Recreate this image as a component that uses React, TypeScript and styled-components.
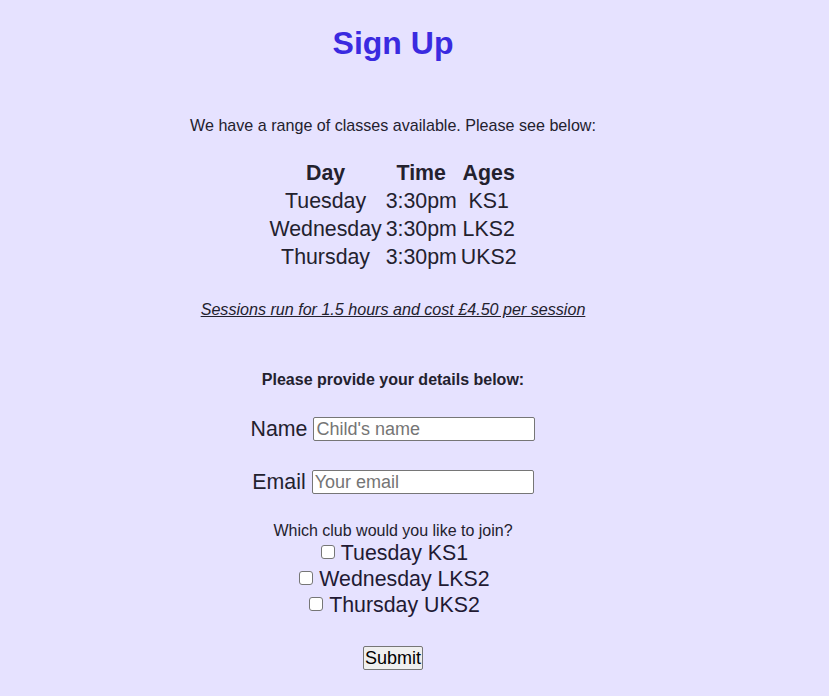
import React from "react";
import styled, { createGlobalStyle } from "styled-components";

const GlobalStyle = createGlobalStyle`
  html, body {
    margin: 0;
    padding: 0;
    background: #e6e2ff;
  }
  body {
    font-family: "Liberation Sans", Arial, sans-serif;
    color: #23212e;
  }
`;

const Page = styled.main`
  width: 786px;
  min-height: 696px;
  display: flex;
  flex-direction: column;
  align-items: center;
  text-align: center;
`;

const Title = styled.h1`
  margin: 25px 0 0;
  font-size: 32px;
  line-height: 37px;
  font-weight: bold;
  color: #3a2ae0;
`;

const Intro = styled.p`
  margin: 54px 0 0;
  font-size: 16.1px;
  line-height: 18px;
`;

const Timetable = styled.table`
  margin-top: 24px;
  border-spacing: 2px;
  font-size: 21.33px;
  line-height: 24px;
`;

const HeadCell = styled.th`
  padding: 1px;
  font-weight: bold;
  text-align: center;
`;

const Cell = styled.td`
  padding: 1px;
  text-align: center;
`;

const Note = styled.p`
  margin: 28px 0 0;
  font-size: 16.1px;
  line-height: 18px;
  font-style: italic;
  text-decoration: underline;
`;

const Form = styled.form`
  display: flex;
  flex-direction: column;
  align-items: center;
`;

const FormHeading = styled.p`
  margin: 53px 0 0;
  font-size: 16px;
  line-height: 18px;
  font-weight: bold;
`;

const FieldRow = styled.div<{ $top: number }>`
  margin-top: ${(p) => p.$top}px;
  display: flex;
  align-items: center;
  gap: 6px;
  height: 24px;
`;

const FieldLabel = styled.label`
  font-size: 21.33px;
  line-height: 24px;
`;

const TextInput = styled.input`
  box-sizing: border-box;
  width: 222px;
  height: 24px;
  margin: 0;
  padding: 1px 2px;
  font-family: "Liberation Sans", Arial, sans-serif;
  font-size: 18px;
  line-height: 20px;
  color: #222;
  background: #ffffff;
  border: 1px solid #767676;
  border-radius: 2px;
  &::placeholder {
    color: #757575;
  }
`;

const Question = styled.p`
  margin: 28px 0 0;
  font-size: 16px;
  line-height: 18px;
`;

const CheckRow = styled.label`
  display: flex;
  align-items: center;
  height: 26px;
  font-size: 21.33px;
  line-height: 24px;
  color: #221a33;
`;

const CheckBox = styled.input`
  appearance: none;
  box-sizing: border-box;
  width: 14px;
  height: 14px;
  margin: 0 6px 2px 3px;
  background: #ffffff;
  border: 1px solid #767676;
  border-radius: 3px;
`;

const SubmitButton = styled.button`
  margin-top: 28px;
  box-sizing: border-box;
  height: 24px;
  padding: 0 1px;
  font-family: "Liberation Sans", Arial, sans-serif;
  font-size: 18px;
  line-height: 20px;
  color: #000;
  background: #efefef;
  border: 1px solid #767676;
  border-radius: 2px;
`;

const sessions = [
  { day: "Tuesday", time: "3:30pm", ages: "KS1" },
  { day: "Wednesday", time: "3:30pm", ages: "LKS2" },
  { day: "Thursday", time: "3:30pm", ages: "UKS2" },
];

export default function App() {
  return (
    <>
      <GlobalStyle />
      <Page>
        <Title>Sign Up</Title>
        <Intro>We have a range of classes available. Please see below:</Intro>
        <Timetable>
          <thead>
            <tr>
              <HeadCell>Day</HeadCell>
              <HeadCell>Time</HeadCell>
              <HeadCell>Ages</HeadCell>
            </tr>
          </thead>
          <tbody>
            {sessions.map((s) => (
              <tr key={s.day}>
                <Cell>{s.day}</Cell>
                <Cell>{s.time}</Cell>
                <Cell>{s.ages}</Cell>
              </tr>
            ))}
          </tbody>
        </Timetable>
        <Note>Sessions run for 1.5 hours and cost £4.50 per session</Note>
        <Form onSubmit={(e) => e.preventDefault()}>
          <FormHeading>Please provide your details below:</FormHeading>
          <FieldRow $top={28}>
            <FieldLabel htmlFor="name">Name</FieldLabel>
            <TextInput id="name" type="text" placeholder="Child's name" />
          </FieldRow>
          <FieldRow $top={29}>
            <FieldLabel htmlFor="email">Email</FieldLabel>
            <TextInput id="email" type="email" placeholder="Your email" />
          </FieldRow>
          <Question>Which club would you like to join?</Question>
          {sessions.map((s) => (
            <CheckRow key={s.day}>
              <CheckBox type="checkbox" />
              {s.day} {s.ages}
            </CheckRow>
          ))}
          <SubmitButton type="submit">Submit</SubmitButton>
        </Form>
      </Page>
    </>
  );
}
